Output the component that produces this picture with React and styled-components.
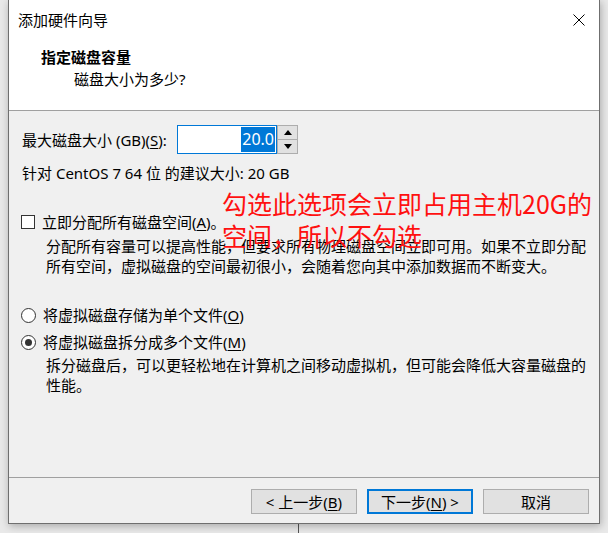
import React from "react";
import styled, { createGlobalStyle } from "styled-components";

const Global = createGlobalStyle`
  html, body { margin: 0; padding: 0; }
  body {
    width: 608px;
    height: 533px;
    overflow: hidden;
    background: #e9e9e9;
    font-family: "Noto Sans", "Noto Sans CJK SC", sans-serif;
    color: #000;
  }
  u { text-decoration: underline; text-underline-offset: 2px; }
`;

const Desktop = styled.div`
  width: 608px;
  height: 533px;
  box-sizing: border-box;
  padding-left: 8px;
  display: flex;
  flex-direction: column;
`;

const Window = styled.div`
  position: relative;
  width: 592px;
  height: 524px;
  box-sizing: border-box;
  border: 1px solid #6f6f6f;
  border-top: none;
  background: #f0f0f0;
  display: flex;
  flex-direction: column;
  box-shadow: 1px 2px 8px rgba(0, 0, 0, 0.28);
  font-size: 15px;
`;

const TitleBar = styled.div`
  height: 40px;
  flex: none;
  background: #fff;
  display: flex;
  align-items: center;
  justify-content: space-between;
  padding: 0 14px 0 9px;
  line-height: 20px;
`;

const Header = styled.div`
  height: 71px;
  flex: none;
  box-sizing: border-box;
  background: #fff;
  border-bottom: 1px solid #a0a0a0;
  padding: 6px 0 0 32px;
`;

const Heading = styled.div`
  font-weight: 700;
  line-height: 22px;
`;

const SubHeading = styled.div`
  line-height: 22px;
  margin-left: 33px;
`;

const Body = styled.div`
  flex: 1;
  padding: 14px 0 0 12px;
  display: flex;
  flex-direction: column;
  line-height: 20px;
`;

const SizeRow = styled.div`
  display: flex;
  align-items: center;
  height: 29px;
`;

const FieldLabel = styled.span`
  width: 156px;
  padding-left: 1px;
  box-sizing: border-box;
  white-space: nowrap;
`;

const NumberInput = styled.div`
  width: 100px;
  height: 29px;
  box-sizing: border-box;
  border: 1px solid #0078d7;
  background: #fff;
  display: flex;
  justify-content: flex-end;
  align-items: center;
  padding-right: 1px;
`;

const Selected = styled.span`
  background: #0078d7;
  color: #fff;
  height: 25px;
  line-height: 25px;
  padding: 0 1px;
  font-size: 16px;
`;

const Spinner = styled.div`
  width: 21px;
  height: 29px;
  box-sizing: border-box;
  border: 1px solid #adadad;
  display: flex;
  flex-direction: column;
`;

const SpinButton = styled.div`
  flex: 1;
  background: #e1e1e1;
  display: flex;
  align-items: center;
  justify-content: center;
  border-top: ${(p) => (p.$lower ? "1px solid #adadad" : "none")};
`;

const Line = styled.div`
  margin-top: ${(p) => p.$mt || 0}px;
  padding-left: ${(p) => p.$pl || 0}px;
  white-space: nowrap;
`;

const OptionRow = styled.div`
  margin-top: ${(p) => p.$mt}px;
  height: 20px;
  display: flex;
  align-items: center;
  gap: 7px;
  white-space: nowrap;
`;

const CheckBox = styled.span`
  width: 14px;
  height: 14px;
  box-sizing: border-box;
  border: 1px solid #333;
  background: #fff;
  flex: none;
`;

const Radio = styled.span`
  width: 15px;
  height: 15px;
  box-sizing: border-box;
  border: 1px solid #333;
  border-radius: 50%;
  background: #fff;
  flex: none;
  display: flex;
  align-items: center;
  justify-content: center;
  &::after {
    content: "";
    width: 7px;
    height: 7px;
    border-radius: 50%;
    background: ${(p) => (p.$checked ? "#333" : "transparent")};
  }
`;

const Footer = styled.div`
  flex: none;
  height: 46px;
  box-sizing: border-box;
  border-top: 1px solid #a0a0a0;
  padding: 11px 10px 0 0;
  display: flex;
  justify-content: flex-end;
  gap: 10px;
`;

const Button = styled.div`
  width: 106px;
  height: 25px;
  box-sizing: border-box;
  background: #e1e1e1;
  border: ${(p) => (p.$default ? "2px solid #0078d7" : "1px solid #adadad")};
  display: flex;
  align-items: center;
  justify-content: center;
  line-height: 20px;
  white-space: nowrap;
`;

const Annotation = styled.div`
  position: absolute;
  left: 213px;
  top: 187px;
  color: #ff1010;
  font-family: "Noto Sans CJK SC", sans-serif;
  font-size: 25px;
  line-height: 32px;
  white-space: nowrap;
`;

const BelowStrip = styled.div`
  height: 9px;
  width: 1px;
  margin-left: 290px;
  background: #555;
`;

const Tri = ({ up }) => (
  <svg width="8" height="5" viewBox="0 0 8 5">
    <path d={up ? "M0 5 L4 0 L8 5 Z" : "M0 0 L4 5 L8 0 Z"} fill="#000" />
  </svg>
);

export default function App() {
  return (
    <>
      <Global />
      <Desktop>
        <Window>
          <TitleBar>
            <span>添加硬件向导</span>
            <svg width="12" height="12" viewBox="0 0 12 12">
              <path d="M0.5 0.5 L11.5 11.5 M11.5 0.5 L0.5 11.5" stroke="#000" strokeWidth="1" />
            </svg>
          </TitleBar>
          <Header>
            <Heading>指定磁盘容量</Heading>
            <SubHeading>磁盘大小为多少?</SubHeading>
          </Header>
          <Body>
            <SizeRow>
              <FieldLabel>
                最大磁盘大小 (GB)(<u>S</u>):
              </FieldLabel>
              <NumberInput>
                <Selected>20.0</Selected>
              </NumberInput>
              <Spinner>
                <SpinButton>
                  <Tri up />
                </SpinButton>
                <SpinButton $lower>
                  <Tri />
                </SpinButton>
              </Spinner>
            </SizeRow>
            <Line $mt={9} $pl={1}>
              针对 CentOS 7 64 位 的建议大小: 20 GB
            </Line>
            <OptionRow $mt={29}>
              <CheckBox />
              <span>
                立即分配所有磁盘空间(<u>A</u>)。
              </span>
            </OptionRow>
            <Line $mt={4} $pl={25}>
              分配所有容量可以提高性能，但要求所有物理磁盘空间立即可用。如果不立即分配
              <br />
              所有空间，虚拟磁盘的空间最初很小，会随着您向其中添加数据而不断变大。
            </Line>
            <OptionRow $mt={29}>
              <Radio />
              <span>
                将虚拟磁盘存储为单个文件(<u>O</u>)
              </span>
            </OptionRow>
            <OptionRow $mt={7}>
              <Radio $checked />
              <span>
                将虚拟磁盘拆分成多个文件(<u>M</u>)
              </span>
            </OptionRow>
            <Line $mt={3} $pl={25}>
              拆分磁盘后，可以更轻松地在计算机之间移动虚拟机，但可能会降低大容量磁盘的
              <br />
              性能。
            </Line>
          </Body>
          <Footer>
            <Button>
              &lt; 上一步(<u>B</u>)
            </Button>
            <Button $default>
              下一步(<u>N</u>) &gt;
            </Button>
            <Button>取消</Button>
          </Footer>
          <Annotation>
            勾选此选项会立即占用主机20G的
            <br />
            空间，所以不勾选
          </Annotation>
        </Window>
        <BelowStrip />
      </Desktop>
    </>
  );
}
